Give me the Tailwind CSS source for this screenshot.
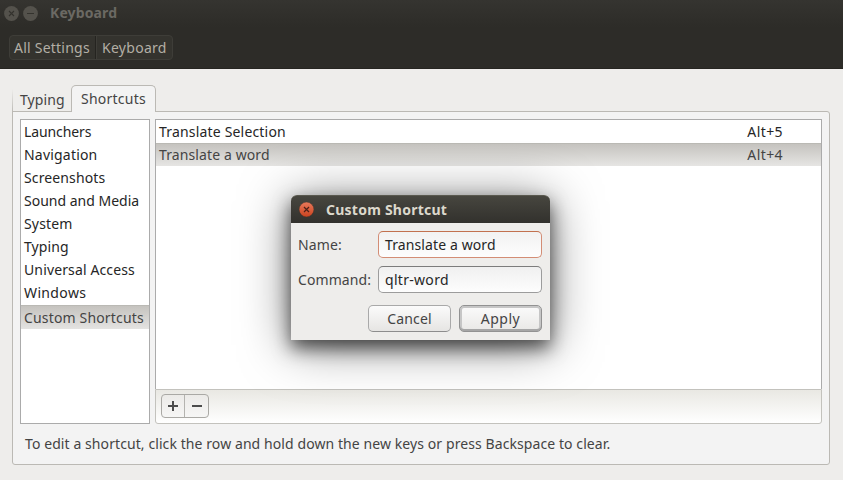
<!DOCTYPE html>
<html lang="en">
<head>
<meta charset="utf-8">
<title>Keyboard</title>
<script src="https://cdn.jsdelivr.net/npm/@tailwindcss/browser@4"></script>
</head>
<body class="relative flex h-[480px] w-[843px] flex-col overflow-hidden bg-[#eeedeb] font-['Noto_Sans',sans-serif] text-[14px] leading-[23px] whitespace-nowrap text-[#444]">

  <!-- Title bar and breadcrumb -->
  <header class="h-[69px] shrink-0 border-b border-[#262521] bg-linear-to-b from-[#353430] to-[#2d2c28] to-40%">
    <div class="flex h-[26px] items-center pl-1 text-[#6b6963]">
      <svg class="size-[15px]" viewBox="0 0 15 15"><circle cx="7.5" cy="7.5" r="7.4" fill="#54524c"/><path d="M5 5l5 5M10 5l-5 5" stroke="#34332e" stroke-width="1.1"/></svg>
      <svg class="ml-1 size-[15px]" viewBox="0 0 15 15"><circle cx="7.5" cy="7.5" r="7.4" fill="#54524c"/><path d="M4 7.5h7" stroke="#34332e" stroke-width="1"/></svg>
      <span class="-mt-px ml-3 font-bold tracking-[0.12px]">Keyboard</span>
    </div>
    <nav class="mt-[9px] ml-[9px] flex h-[25px] w-[164px] rounded border border-[#3e3d38] bg-[#34332e] text-[#b3afa5]">
      <span class="w-[86px] border-r border-[#252420] pl-1 leading-[24px] tracking-[0.23px]">All Settings</span>
      <span class="border-l border-[#3e3d38] pl-[5px] leading-[24px] tracking-[0.28px]">Keyboard</span>
    </nav>
  </header>

  <main class="ml-3 flex w-[818px] flex-col pt-4">
    <!-- Notebook tabs -->
    <div class="z-10 -mb-px flex h-[27px]">
      <div class="relative w-[59px] pt-[3px] pl-2 tracking-[0.08px]"><span class="absolute top-1 bottom-0 left-0 w-px bg-linear-to-b from-transparent to-[#bbb9b4]"></span>Typing</div>
      <div class="w-[85px] rounded-t-[5px] border border-b-0 border-[#bbb9b4] bg-[#f3f3f3] pt-px pl-[9px] tracking-[0.24px]">Shortcuts</div>
    </div>

    <section class="h-[354px] rounded-b-[3px] rounded-tr-[3px] border border-[#bbb9b4] bg-[#f3f3f3] px-[7px] pt-[7px]">
      <div class="flex h-[305px] gap-[5px]">
        <!-- Categories -->
        <ul class="w-[130px] border border-[#ababab] bg-white text-[#262626] *:h-[23px] *:pl-[3px]">
          <li class="tracking-[-0.1px]">Launchers</li>
          <li class="tracking-[0.2px]">Navigation</li>
          <li class="tracking-[0.12px]">Screenshots</li>
          <li>Sound and Media</li>
          <li class="tracking-[0.16px]">System</li>
          <li class="tracking-[0.08px]">Typing</li>
          <li class="tracking-[0.13px]">Universal Access</li>
          <li class="tracking-[0.36px]">Windows</li>
          <li class="mt-px box-content border-t border-[#bab9b4] bg-linear-to-b from-[#c5c3bf] to-[#e4e3e1] tracking-[0.16px] text-[#444]">Custom Shortcuts</li>
        </ul>

        <!-- Shortcuts of the selected category -->
        <div class="flex w-[667px] flex-col">
          <div class="h-[270px] border border-b-0 border-[#ababab] bg-white text-[#262626]">
            <div class="flex h-[23px] justify-between pr-[38px] pl-[3px]"><span class="tracking-[0.18px]">Translate Selection</span><span class="tracking-[0.4px]">Alt+5</span></div>
            <div class="flex h-[23px] justify-between border-t border-[#bab9b4] bg-linear-to-b from-[#c5c3bf] to-[#e6e5e3] pr-[38px] pl-[3px] leading-[21px] text-[#444]"><span class="tracking-[0.11px]">Translate a word</span><span class="tracking-[0.4px]">Alt+4</span></div>
          </div>
          <div class="flex h-[35px] rounded-b-[3px] border border-[#c3c2bd] bg-linear-to-b from-[#e9e8e3] to-white pt-1 pl-[5px]">
            <div class="flex h-6 w-12 rounded-[4px] border border-[#aaa9a5] bg-linear-to-b from-[#ecebe8] to-[#f6f6f5]">
              <span class="flex w-[23px] items-center justify-center border-r border-[#b4b3af]"><svg class="size-[10px]" viewBox="0 0 10 10"><path d="M0 5h10M5 0v10" stroke="#4c4c4c" stroke-width="2"/></svg></span>
              <span class="flex flex-1 items-center justify-center"><svg class="size-[10px]" viewBox="0 0 10 10"><path d="M0 5h10" stroke="#4c4c4c" stroke-width="2"/></svg></span>
            </div>
          </div>
        </div>
      </div>
      <p class="mt-2 ml-[5px] tracking-[0.085px]">To edit a shortcut, click the row and hold down the new keys or press Backspace to clear.</p>
    </section>
  </main>

  <!-- Custom Shortcut dialog -->
  <div class="absolute top-[195px] left-[291px] z-20 h-[145px] w-[259px] rounded-t-[6px] bg-[#eeedeb] shadow-[0_8px_18px_rgba(0,0,0,0.62),0_5px_50px_rgba(0,0,0,0.5)]">
    <div class="flex h-7 items-center rounded-t-[6px] border-t border-[#5a594f] bg-linear-to-b from-[#47463f] to-[#32312d] pl-2 font-bold text-[#dcd8cc]">
      <svg class="size-[15px]" viewBox="0 0 15 15"><defs><linearGradient id="close" x2="0" y2="1"><stop stop-color="#e8795b"/><stop offset="1" stop-color="#c9431f"/></linearGradient></defs><circle cx="7.5" cy="7.5" r="7.4" fill="url(#close)" stroke="#2f2e29" stroke-width=".4"/><path d="M5 5l5 5M10 5l-5 5" stroke="#4a2018" stroke-width="1.2"/></svg>
      <span class="ml-3 tracking-[0.24px]">Custom Shortcut</span>
    </div>
    <div class="flex flex-col gap-2 pt-2 pr-2 pl-[7px]">
      <label class="flex h-[27px] items-center"><span class="w-20 tracking-[0.15px]">Name:</span><span class="h-full flex-1 rounded-[5px] border border-[#d38d75] border-t-[#c2714f] bg-linear-to-b from-[#f2f2f2] to-[#fdfdfd] pl-[6px] leading-[25px] tracking-[0.11px] text-[#262626]">Translate a word</span></label>
      <label class="flex h-[27px] items-center"><span class="w-20 tracking-[0.08px]">Command:</span><span class="h-full flex-1 rounded-[5px] border border-[#9c9c9c] border-t-[#7c7c7c] bg-linear-to-b from-[#f0f0f0] to-[#fdfdfd] pl-[6px] leading-[25px] tracking-[0.3px] text-[#262626]">qltr-word</span></label>
      <div class="mt-1 flex justify-end gap-2 text-center leading-[25px]">
        <span class="h-[27px] w-[83px] rounded-[5px] border border-[#a9a9a9] border-b-[#8d8d8d] bg-linear-to-b from-[#fbfbfb] to-[#e6e5e3] tracking-[0.15px]">Cancel</span>
        <span class="h-[27px] w-[83px] rounded-[5px] border border-[#929292] bg-linear-to-b from-[#fbfbfb] to-[#e9e8e6] tracking-[0.5px] inset-shadow-[0_-2px_0_#a6a6a6,0_0_0_2px_#c6c6c6]">Apply</span>
      </div>
    </div>
  </div>
</body>
</html>
